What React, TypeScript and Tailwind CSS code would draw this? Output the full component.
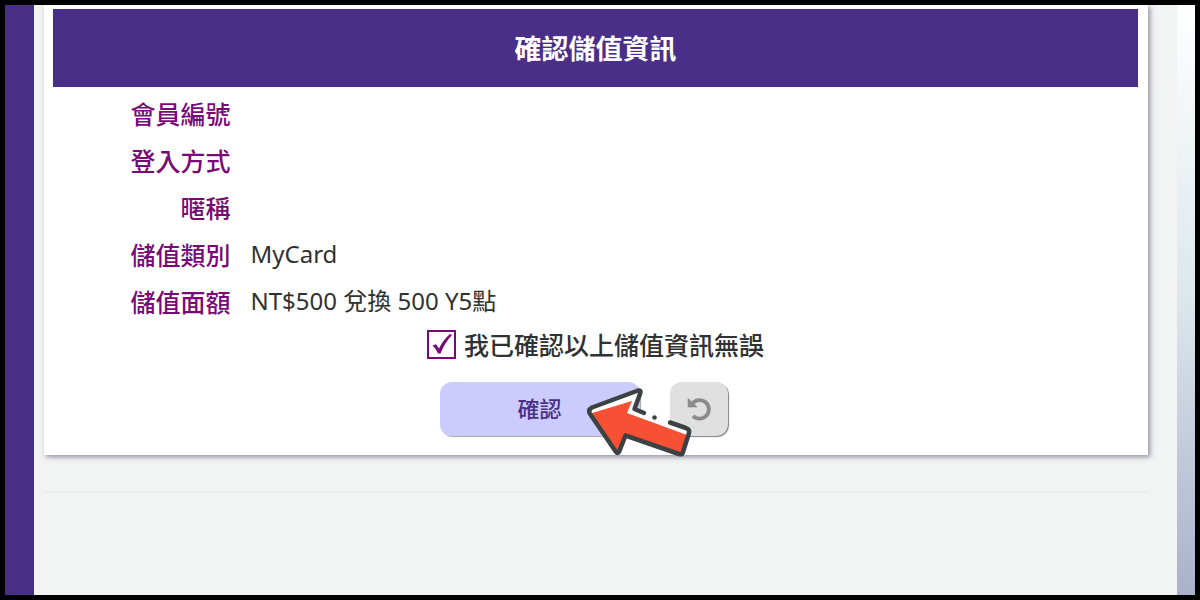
import { useState } from 'react';

const rows = [
  { label: '會員編號', value: '' },
  { label: '登入方式', value: '' },
  { label: '暱稱', value: '' },
  { label: '儲值類別', value: 'MyCard' },
  { label: '儲值面額', value: 'NT$500 兌換 500 Y5點' },
];

function UndoIcon() {
  return (
    <svg aria-hidden="true" viewBox="0 0 24 24" className="size-6" fill="none">
      <path d="M5.6 6.200A9.300 9.300 0 1 1 6 18.900" stroke="#8b8b8b" strokeWidth="3.800" />
      <path d="M1 1.400L10.200 10H1Z" fill="#8b8b8b" stroke="#8b8b8b" strokeWidth="0.600" />
    </svg>
  );
}

function PointerArrow() {
  return (
    <svg
      aria-hidden="true"
      viewBox="0 0 110 72"
      className="pointer-events-none absolute top-1 left-36 h-18 w-28 max-w-none"
      preserveAspectRatio="xMinYMin"
      strokeLinecap="round"
      strokeLinejoin="round"
    >
      <path d="M5 21L57 4L50 23L105 44L97 68L41 50L34 67L5 27Z" fill="#fff" />
      <path d="M8 27L48 15L43 27L103 49L97 68L41 50L34 67Z" fill="#f85035" />
      <path
        d="M86 36.500L102 42Q106 43.500 105 47L99 66Q98 69 95 68L41.500 49.500L35 66Q33.500 68 32 66L5.500 27Q4 23.500 8 21.500L54 4.500Q57 4 56.500 6.500L50.500 23L60 27"
        fill="none"
        stroke="#3c4243"
        strokeWidth="4.500"
      />
      <circle cx="70.500" cy="31.500" r="2.300" fill="#3c4243" />
    </svg>
  );
}

export default function App() {
  const [confirmed, setConfirmed] = useState(true);

  return (
    <div
      lang="zh-Hant"
      className="flex min-h-screen border-5 border-black bg-[#f2f4f4] font-['Noto_Sans','Noto_Sans_CJK_TC',sans-serif] text-[#2f3232]"
    >
      <aside className="w-[29px] shrink-0 bg-[#492f88]" />

      <main className="min-w-0 flex-1 overflow-hidden pr-[29px] pl-2.5">
        <form
          className="bg-white pt-1 pr-2.5 pb-[19px] pl-[9px] shadow-[2px_2px_5px_rgba(50,40,70,0.5)]"
          onSubmit={(event) => event.preventDefault()}
        >
          <h1 className="flex h-[78px] items-center justify-center bg-[#492f88] font-['Noto_Sans_CJK_TC',sans-serif] text-[27px] font-bold text-white">
            確認儲值資訊
          </h1>

          <dl className="pt-0.5">
            {rows.map((row) => (
              <div key={row.label} className="grid h-[47px] grid-cols-[1fr_5fr] items-center gap-5">
                <dt className="text-right font-['Noto_Sans_CJK_TC',sans-serif] text-[25px] leading-9 font-medium text-[#780a78]">
                  {row.label}
                </dt>
                <dd className="text-2xl">{row.value}</dd>
              </div>
            ))}
          </dl>

          <div className="flex h-10 items-center justify-center">
            <label className="flex items-center gap-2 font-['Noto_Sans_CJK_TC',sans-serif] text-[25px] leading-9 font-medium">
              <span className="relative flex">
                <input
                  type="checkbox"
                  checked={confirmed}
                  onChange={(event) => setConfirmed(event.target.checked)}
                  className="peer size-[29px] appearance-none border-2 border-[#780a78] bg-white"
                />
                <svg
                  aria-hidden="true"
                  viewBox="0 0 29 29"
                  className="pointer-events-none invisible absolute inset-0 peer-checked:visible"
                >
                  <path d="M5.500 15.500L9 14.300L12 18.500Q16 10 23 4L25 5Q17.500 13 13.500 23.500H11Q9 18.500 5.500 15.500Z" fill="#780a78" />
                </svg>
              </span>
              我已確認以上儲值資訊無誤
            </label>
          </div>

          <div className="flex justify-center gap-[30px] pt-[18px] pr-6">
            <div className="relative">
              <button
                type="submit"
                className="h-[54px] w-[200px] rounded-xl bg-[#cccbfd] pb-1 font-['Noto_Sans_CJK_TC',sans-serif] text-[22px] font-medium text-[#492f88] shadow-[1px_1px_1px_rgba(0,0,0,0.35)]"
              >
                確認
              </button>
              <PointerArrow />
            </div>
            <button
              type="button"
              aria-label="重設"
              onClick={() => setConfirmed(false)}
              className="flex h-[54px] w-[58px] items-center justify-center rounded-xl bg-[#e0e0e0] shadow-[1px_1px_1px_rgba(0,0,0,0.5)]"
            >
              <UndoIcon />
            </button>
          </div>
        </form>

        <hr className="mt-9 rounded-b-lg border-t-2 border-[#ecedef]" />
      </main>

      <aside className="w-[18px] shrink-0 bg-linear-to-b from-white via-[#dce7ec] to-[#a9b1cb]" />
    </div>
  );
}
